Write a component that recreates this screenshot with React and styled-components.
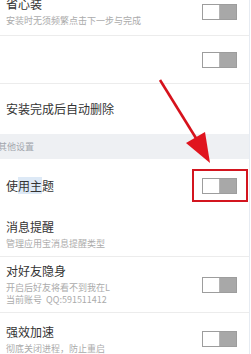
import styled, { createGlobalStyle } from 'styled-components';

const GlobalStyle = createGlobalStyle`
  html, body {
    margin: 0;
    padding: 0;
    background: #ffffff;
    overflow: hidden;
  }
  body {
    font-family: "Noto Sans CJK SC", "Noto Sans", sans-serif;
  }
`;

const Page = styled.div`
  position: relative;
  width: 250px;
  height: 354px;
  overflow: hidden;
  border-right: 1px solid #e6ebf2;
  box-sizing: border-box;
`;

const List = styled.div`
  margin-top: -12px;
  display: flex;
  flex-direction: column;
`;

const Row = styled.div`
  display: flex;
  align-items: center;
  justify-content: space-between;
  height: ${(p) => p.h}px;
  padding: 0 12px 0 6px;
  margin-left: ${(p) => (p.divider ? '-3px' : '0')};
  padding-left: ${(p) => (p.divider ? '9px' : '6px')};
  border-bottom: ${(p) => (p.divider ? '1px solid #ececec' : 'none')};
  background: #ffffff;
  box-sizing: border-box;
  margin-right: 0;
`;

const TextBlock = styled.div`
  display: flex;
  flex-direction: column;
  gap: 3px;
`;

const Title = styled.div`
  font-size: 12px;
  line-height: 16px;
  color: #333333;
  white-space: nowrap;
`;

const Mark = styled.span`
  background: #dde9f6;
`;

const Sub = styled.div`
  font-size: 9px;
  line-height: 12px;
  color: #ababab;
  white-space: nowrap;
`;

const Section = styled.div`
  height: 25px;
  display: flex;
  align-items: center;
  background: #eef0f3;
  font-size: 9px;
  color: #a2a6ad;
  padding-left: 0;
  text-indent: -2px;
`;

const ToggleWrap = styled.div`
  position: relative;
  flex-shrink: 0;
`;

const Track = styled.div`
  display: flex;
  width: 35px;
  height: 16px;
  border: 1px solid #9d9d9d;
  background: #a8a8a8;
  box-sizing: border-box;
`;

const Knob = styled.div`
  width: 16px;
  height: 100%;
  background: #ffffff;
  border-right: 1px solid #b5b5b5;
`;

const Highlight = styled.div`
  position: absolute;
  top: -9px;
  bottom: -8px;
  left: -10px;
  right: -11px;
  border: 2px solid #d3151f;
`;

const Arrow = styled.svg`
  position: absolute;
  top: 0;
  left: 0;
  pointer-events: none;
`;

function Toggle({ marked }) {
  return (
    <ToggleWrap>
      <Track>
        <Knob />
      </Track>
      {marked && <Highlight />}
    </ToggleWrap>
  );
}

export default function App() {
  return (
    <Page>
      <GlobalStyle />
      <List>
        <Row h={48} divider>
          <TextBlock>
            <Title>省心装</Title>
            <Sub>安装时无须频繁点击下一步与完成</Sub>
          </TextBlock>
          <Toggle />
        </Row>
        <Row h={48} divider>
          <span />
          <Toggle />
        </Row>
        <Row h={50}>
          <Title>安装完成后自动删除</Title>
        </Row>
        <Section>其他设置</Section>
        <Row h={54}>
          <Title>
            使<Mark>用主</Mark>题
          </Title>
          <Toggle marked />
        </Row>
        <Row h={44} divider>
          <TextBlock>
            <Title>消息提醒</Title>
            <Sub>管理应用宝消息提醒类型</Sub>
          </TextBlock>
        </Row>
        <Row h={56} divider>
          <TextBlock>
            <Title>对好友隐身</Title>
            <TextBlock style={{ gap: 0 }}>
              <Sub>开启后好友将看不到我在L</Sub>
              <Sub>当前账号&nbsp;&nbsp;QQ:591511412</Sub>
            </TextBlock>
          </TextBlock>
          <Toggle />
        </Row>
        <Row h={52}>
          <TextBlock>
            <Title>强效加速</Title>
            <Sub>彻底关闭进程，防止重启</Sub>
          </TextBlock>
          <Toggle />
        </Row>
      </List>
      <Arrow width="251" height="354" viewBox="0 0 251 354">
        <line x1="160" y1="80" x2="199" y2="143" stroke="#d6121c" strokeWidth="2.6" />
        <polygon points="186,143 205,132 210,163" fill="#e0141e" />
      </Arrow>
    </Page>
  );
}
